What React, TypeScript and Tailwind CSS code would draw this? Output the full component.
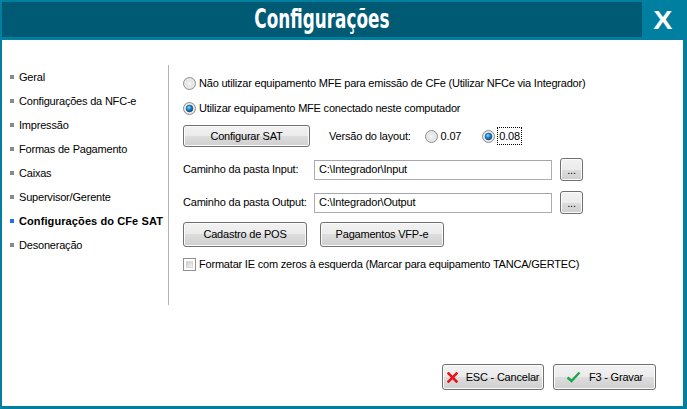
import React from "react";

const btn =
  "flex items-center justify-center border border-[#707070] rounded-[3px] bg-[linear-gradient(#f2f2f2,#ebebeb_50%,#dddddd_50%,#cfcfcf)] shadow-[inset_0_0_0_1px_#fbfbfb] text-[11px] text-black";

function Radio({ checked }: { checked?: boolean }) {
  return (
    <svg width="13" height="13" viewBox="0 0 13 13" className="shrink-0">
      <defs>
        <radialGradient id="rg" cx="0.5" cy="0.5" r="0.5">
          <stop offset="0" stopColor="#f8f8f8" />
          <stop offset="1" stopColor="#d4d4d4" />
        </radialGradient>
        <radialGradient id="rb" cx="0.4" cy="0.35" r="0.6">
          <stop offset="0" stopColor="#8fe0ff" />
          <stop offset="0.5" stopColor="#1b8fd6" />
          <stop offset="1" stopColor="#0c4d8a" />
        </radialGradient>
      </defs>
      <circle cx="6.5" cy="6.5" r="6" fill="url(#rg)" stroke="#8e9092" strokeWidth="1" />
      <circle cx="6.5" cy="6.5" r="4.6" fill="none" stroke="#f4f4f4" strokeWidth="0.8" />
      {checked && <circle cx="6.5" cy="6.5" r="3.4" fill="url(#rb)" stroke="#1c4f7a" strokeWidth="0.6" />}
    </svg>
  );
}

function Checkbox() {
  return (
    <div className="w-[13px] h-[13px] shrink-0 border border-[#8e8f8f] bg-white p-[2px]">
      <div className="w-full h-full bg-[linear-gradient(135deg,#cbcbcb,#f5f5f5)] border border-[#d8d8d8]" />
    </div>
  );
}

const menu = [
  "Geral",
  "Configurações da NFC-e",
  "Impressão",
  "Formas de Pagamento",
  "Caixas",
  "Supervisor/Gerente",
  "Configurações do CFe SAT",
  "Desoneração",
];

export default function App() {
  return (
    <div className="w-[687px] h-[409px] bg-[#007fa1] flex flex-col pl-[2px] pr-[4px] pt-[2px] pb-[3px] font-['Liberation_Sans',Arial,sans-serif] text-[11px] tracking-[-0.2px] text-black overflow-hidden">
      <div className="h-[35px] flex shrink-0">
        <div className="flex-1 bg-[#005a74] flex items-center justify-center">
          <span className="inline-block scale-x-72 font-['DejaVu_Sans_Condensed','DejaVu_Sans',sans-serif] font-bold text-[26px] leading-none text-white tracking-[0px] pb-[2px]">
            Configurações
          </span>
        </div>
        <div className="w-[41px] flex items-center justify-center">
          <span className="inline-block scale-x-110 font-['Liberation_Sans',Arial,sans-serif] font-bold text-[26px] leading-none text-white tracking-[0px]">X</span>
        </div>
      </div>
      <div className="mt-[3px] flex-1 bg-white flex flex-col">
        <div className="flex">
          <div className="w-[166px] pt-[25px] pl-[8px] flex flex-col">
            {menu.map((m, i) => {
              const sel = i === 6;
              return (
                <div key={m} className="h-[24px] flex items-center gap-[5px]">
                  <div className={`w-[4px] h-[4px] ${sel ? "bg-[#1e73e8]" : "bg-[#8a8a8a]"}`} />
                  <span className={sel ? "font-bold tracking-[0.1px]" : ""}>{m}</span>
                </div>
              );
            })}
          </div>
          <div className="mt-[25px] h-[240px] border-l border-[#b4b4b4] pl-[14px] flex flex-col">
            <div className="mt-[10px] h-[16px] flex items-center gap-[3px]">
              <Radio />
              <span>Não utilizar equipamento MFE para emissão de CFe (Utilizar NFCe via Integrador)</span>
            </div>
            <div className="mt-[9px] h-[16px] flex items-center gap-[3px]">
              <Radio checked />
              <span>Utilizar equipamento MFE conectado neste computador</span>
            </div>
            <div className="mt-[9px] h-[22px] flex items-center">
              <div className={`${btn} w-[127px] h-[22px]`}>Configurar SAT</div>
              <span className="ml-[19px]">Versão do layout:</span>
              <div className="ml-[14px] flex items-center gap-[3px]">
                <Radio />
                <span>0.07</span>
              </div>
              <div className="ml-[21px] flex items-center gap-[3px]">
                <Radio checked />
                <span className="outline-1 outline-dotted outline-black px-[1px]">0.08</span>
              </div>
            </div>
            <div className="mt-[11px] h-[23px] flex items-center">
              <span className="w-[131px]">Caminho da pasta Input:</span>
              <div className="w-[238px] h-[20px] border border-[#abadb3] border-t-[#a4a6ab] bg-white flex items-center pl-[4px]">
                C:\Integrador\Input
              </div>
              <div className={`${btn} ml-[8px] w-[23px] h-[23px] pt-[2px]`}>...</div>
            </div>
            <div className="mt-[10px] h-[23px] flex items-center">
              <span className="w-[131px]">Caminho da pasta Output:</span>
              <div className="w-[238px] h-[20px] border border-[#abadb3] border-t-[#a4a6ab] bg-white flex items-center pl-[4px]">
                C:\Integrador\Output
              </div>
              <div className={`${btn} ml-[8px] w-[23px] h-[23px] pt-[2px]`}>...</div>
            </div>
            <div className="mt-[8px] h-[25px] flex items-center gap-[13px]">
              <div className={`${btn} w-[124px] h-[25px]`}>Cadastro de POS</div>
              <div className={`${btn} w-[124px] h-[25px]`}>Pagamentos VFP-e</div>
            </div>
            <div className="mt-[11px] h-[13px] flex items-center gap-[3px]">
              <Checkbox />
              <span>Formatar IE com zeros à esquerda (Marcar para equipamento TANCA/GERTEC)</span>
            </div>
          </div>
        </div>
        <div className="flex-1" />
        <div className="flex justify-end gap-[9px] pr-[27px] pb-[16px]">
          <div className={`${btn} w-[102px] h-[26px] gap-[8px]`}>
            <svg width="11" height="11" viewBox="0 0 11 11">
              <path d="M1.5 1.5 L9.5 9.5 M9.5 1.5 L1.5 9.5" stroke="#e8141b" strokeWidth="2.6" strokeLinecap="square" />
            </svg>
            <span>ESC - Cancelar</span>
          </div>
          <div className={`${btn} w-[103px] h-[26px] gap-[8px]`}>
            <svg width="15" height="12" viewBox="0 0 15 12">
              <path d="M1.5 6.5 L5.5 10 L13.5 1.5" stroke="#1fa64a" strokeWidth="2.4" fill="none" />
            </svg>
            <span>F3 - Gravar</span>
          </div>
        </div>
      </div>
    </div>
  );
}
